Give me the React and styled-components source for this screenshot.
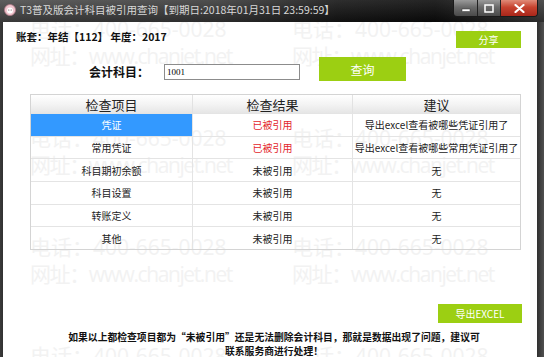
import React from 'react';
import styled, { createGlobalStyle } from 'styled-components';

const GlobalStyle = createGlobalStyle`
  html, body { margin: 0; padding: 0; background: #1a1a1a; }
  body { font-family: "Noto Sans CJK SC", "Liberation Sans", sans-serif; }
  #root { width: 544px; height: 357px; overflow: hidden; }
`;

const Window = styled.div`
  width: 544px;
  height: 357px;
  display: flex;
  flex-direction: column;
  background: #2c2c2c;
  overflow: hidden;
`;

const TitleBar = styled.div`
  height: 22px;
  flex-shrink: 0;
  display: flex;
  align-items: flex-start;
  background:
    linear-gradient(to bottom, rgba(255,255,255,0.10), rgba(0,0,0,0.25)),
    linear-gradient(to right, #4c4c4c 0%, #3a3a3a 40%, #161616 62%, #0c0c0c 80%, #3c3c3c 100%);
`;

const AppIcon = styled.svg`
  width: 12px;
  height: 12px;
  margin: 4px 4px 0 4px;
  flex-shrink: 0;
`;

const TitleText = styled.div`
  color: #d8d8d8;
  font-size: 10.5px;
  line-height: 20px;
  white-space: nowrap;
  flex: 1;
`;

const Controls = styled.div`
  display: flex;
  margin-right: 6px;
  height: 16px;
  border: 1px solid #1a1a1a;
  border-top: none;
  border-radius: 0 0 4px 4px;
  overflow: hidden;
`;

const CtrlButton = styled.div`
  width: ${p => p.$w}px;
  height: 16px;
  display: flex;
  align-items: center;
  justify-content: center;
  border-left: ${p => (p.$first ? 'none' : '1px solid #222')};
  background: ${p =>
    p.$close
      ? 'linear-gradient(#e08b78, #c7432f 45%, #a9261a)'
      : 'linear-gradient(#9a9a9a, #6a6a6a 45%, #4a4a4a)'};
`;

const Body = styled.div`
  flex: 1;
  display: flex;
  padding: 0 7px 0 3px;
  background: linear-gradient(to right, #3a3a3a, #2a2a2a 1%, #2a2a2a 98.5%, #505050);
`;

const Client = styled.div`
  position: relative;
  flex: 1;
  background: #fff;
  display: flex;
  flex-direction: column;
  overflow: hidden;
`;

const Watermark = styled.div`
  position: absolute;
  top: -6px;
  left: 27px;
  z-index: 0;
  pointer-events: none;
`;

const MarkBlock = styled.div`
  height: 109px;
  display: grid;
  grid-template-columns: 262px 262px;
  grid-auto-rows: 27px;
`;

const MarkLine = styled.div`
  color: #f2f2f2;
  font-family: "Open Sans", "Noto Sans CJK SC", sans-serif;
  font-size: 21px;
  line-height: 27px;
  white-space: nowrap;
  letter-spacing: ${p => (p.$tight ? '-1.4px' : '0')};
`;

const Content = styled.div`
  position: relative;
  z-index: 1;
  display: flex;
  flex-direction: column;
`;

const TopRow = styled.div`
  display: flex;
  justify-content: space-between;
  align-items: flex-start;
  padding: 9px 16px 0 13px;
`;

const Account = styled.div`
  font-size: 10.5px;
  line-height: 11px;
  font-weight: 700;
  color: #111;
`;

const GreenButton = styled.div`
  width: ${p => p.$w}px;
  height: ${p => p.$h}px;
  background: #9ccf12;
  color: #fff;
  font-size: ${p => p.$fs || 10}px;
  display: flex;
  align-items: center;
  justify-content: center;
`;

const QueryRow = styled.div`
  display: flex;
  align-items: flex-start;
  margin-top: 9px;
  padding-left: 86px;
  height: 24px;
`;

const Label = styled.div`
  width: 75px;
  margin-top: 8px;
  font-size: 12px;
  line-height: 14px;
  font-weight: 700;
  color: #111;
`;

const Input = styled.div`
  width: 132px;
  height: 14px;
  margin: 7px 19px 0 0;
  border: 1px solid #8c8c8c;
  background: #fff;
  font-family: "Liberation Serif", serif;
  font-size: 9px;
  line-height: 14px;
  padding-left: 2px;
  box-sizing: content-box;
  color: #000;
`;

const Table = styled.div`
  margin: 13px 16px 0 27px;
  border: 1px solid #d4d4d4;
  display: grid;
  grid-template-columns: 161px 160px 1fr;
`;

const HeadCell = styled.div`
  height: 18px;
  display: flex;
  align-items: center;
  justify-content: center;
  font-size: 13px;
  color: #222;
  background: linear-gradient(#ffffff, #f4f4f4 50%, #e6e6e6);
  border-left: ${p => (p.$first ? 'none' : '1px solid #e2e2e2')};
`;

const Cell = styled.div`
  height: 22.67px;
  box-sizing: border-box;
  display: flex;
  align-items: center;
  justify-content: center;
  font-size: 10px;
  white-space: nowrap;
  border-top: 1px solid #e4e4e4;
  border-left: ${p => (p.$first ? 'none' : '1px solid #e4e4e4')};
  color: ${p => (p.$selected ? '#fff' : p.$red ? '#e3262b' : '#222')};
  background: ${p => (p.$selected ? '#3399ff' : 'transparent')};
`;

const ExportRow = styled.div`
  display: flex;
  justify-content: flex-end;
  margin-top: 54px;
  padding-right: 15px;
`;

const Note = styled.div`
  margin-top: 7px;
  padding-left: 8px;
  text-align: center;
  font-size: 9.8px;
  line-height: 14px;
  font-weight: 700;
  color: #111;
`;

const rows = [
  { item: '凭证', result: '已被引用', red: true, advice: '导出excel查看被哪些凭证引用了', selected: true },
  { item: '常用凭证', result: '已被引用', red: true, advice: '导出excel查看被哪些常用凭证引用了' },
  { item: '科目期初余额', result: '未被引用', advice: '无' },
  { item: '科目设置', result: '未被引用', advice: '无' },
  { item: '转账定义', result: '未被引用', advice: '无' },
  { item: '其他', result: '未被引用', advice: '无' },
];

const App = () => {
  return (
    <>
      <GlobalStyle />
      <Window>
        <TitleBar>
          <AppIcon viewBox="0 0 12 12">
            <circle cx="6" cy="6" r="5.5" fill="#f1c6cf" stroke="#b07a88" strokeWidth="0.8" />
            <circle cx="6" cy="6.5" r="3" fill="#fff" />
            <circle cx="4.8" cy="6" r="0.6" fill="#7a4a55" />
            <circle cx="7.2" cy="6" r="0.6" fill="#7a4a55" />
          </AppIcon>
          <TitleText>T3普及版会计科目被引用查询【到期日:2018年01月31日 23:59:59】</TitleText>
          <Controls>
            <CtrlButton $w={23} $first>
              <svg width="10" height="8" viewBox="0 0 10 8">
                <rect x="1" y="5" width="8" height="2.5" fill="#fff" stroke="#333" strokeWidth="0.5" />
              </svg>
            </CtrlButton>
            <CtrlButton $w={22}>
              <svg width="10" height="9" viewBox="0 0 10 9">
                <rect x="1" y="1" width="8" height="7" fill="none" stroke="#fff" strokeWidth="1.5" />
              </svg>
            </CtrlButton>
            <CtrlButton $w={36} $close>
              <svg width="11" height="9" viewBox="0 0 11 9">
                <path d="M1.5 1 L9.5 8 M9.5 1 L1.5 8" stroke="#fff" strokeWidth="2.2" strokeLinecap="round" />
              </svg>
            </CtrlButton>
          </Controls>
        </TitleBar>
        <Body>
          <Client>
            <Watermark>
              {[0, 1, 2, 3].map(i => (
                <MarkBlock key={i}>
                  <MarkLine>电话：400-665-0028</MarkLine>
                  <MarkLine>电话：400-665-0028</MarkLine>
                  <MarkLine $tight>网址：www.chanjet.net</MarkLine>
                  <MarkLine $tight>网址：www.chanjet.net</MarkLine>
                </MarkBlock>
              ))}
            </Watermark>
            <Content>
              <TopRow>
                <Account>账套：年结【112】 年度：2017</Account>
                <GreenButton $w={65} $h={17}>分享</GreenButton>
              </TopRow>
              <QueryRow>
                <Label>会计科目：</Label>
                <Input>1001</Input>
                <GreenButton $w={87} $h={24} $fs={12}>查询</GreenButton>
              </QueryRow>
              <Table>
                <HeadCell $first>检查项目</HeadCell>
                <HeadCell>检查结果</HeadCell>
                <HeadCell>建议</HeadCell>
                {rows.map(r => (
                  <React.Fragment key={r.item}>
                    <Cell $first $selected={r.selected}>{r.item}</Cell>
                    <Cell $red={r.red}>{r.result}</Cell>
                    <Cell>{r.advice}</Cell>
                  </React.Fragment>
                ))}
              </Table>
              <ExportRow>
                <GreenButton $w={84} $h={19}>导出EXCEL</GreenButton>
              </ExportRow>
              <Note>
                如果以上都检查项目都为“未被引用”还是无法删除会计科目，那就是数据出现了问题，建议可
                <br />
                联系服务商进行处理！
              </Note>
            </Content>
          </Client>
        </Body>
      </Window>
    </>
  );
};

export default App;
